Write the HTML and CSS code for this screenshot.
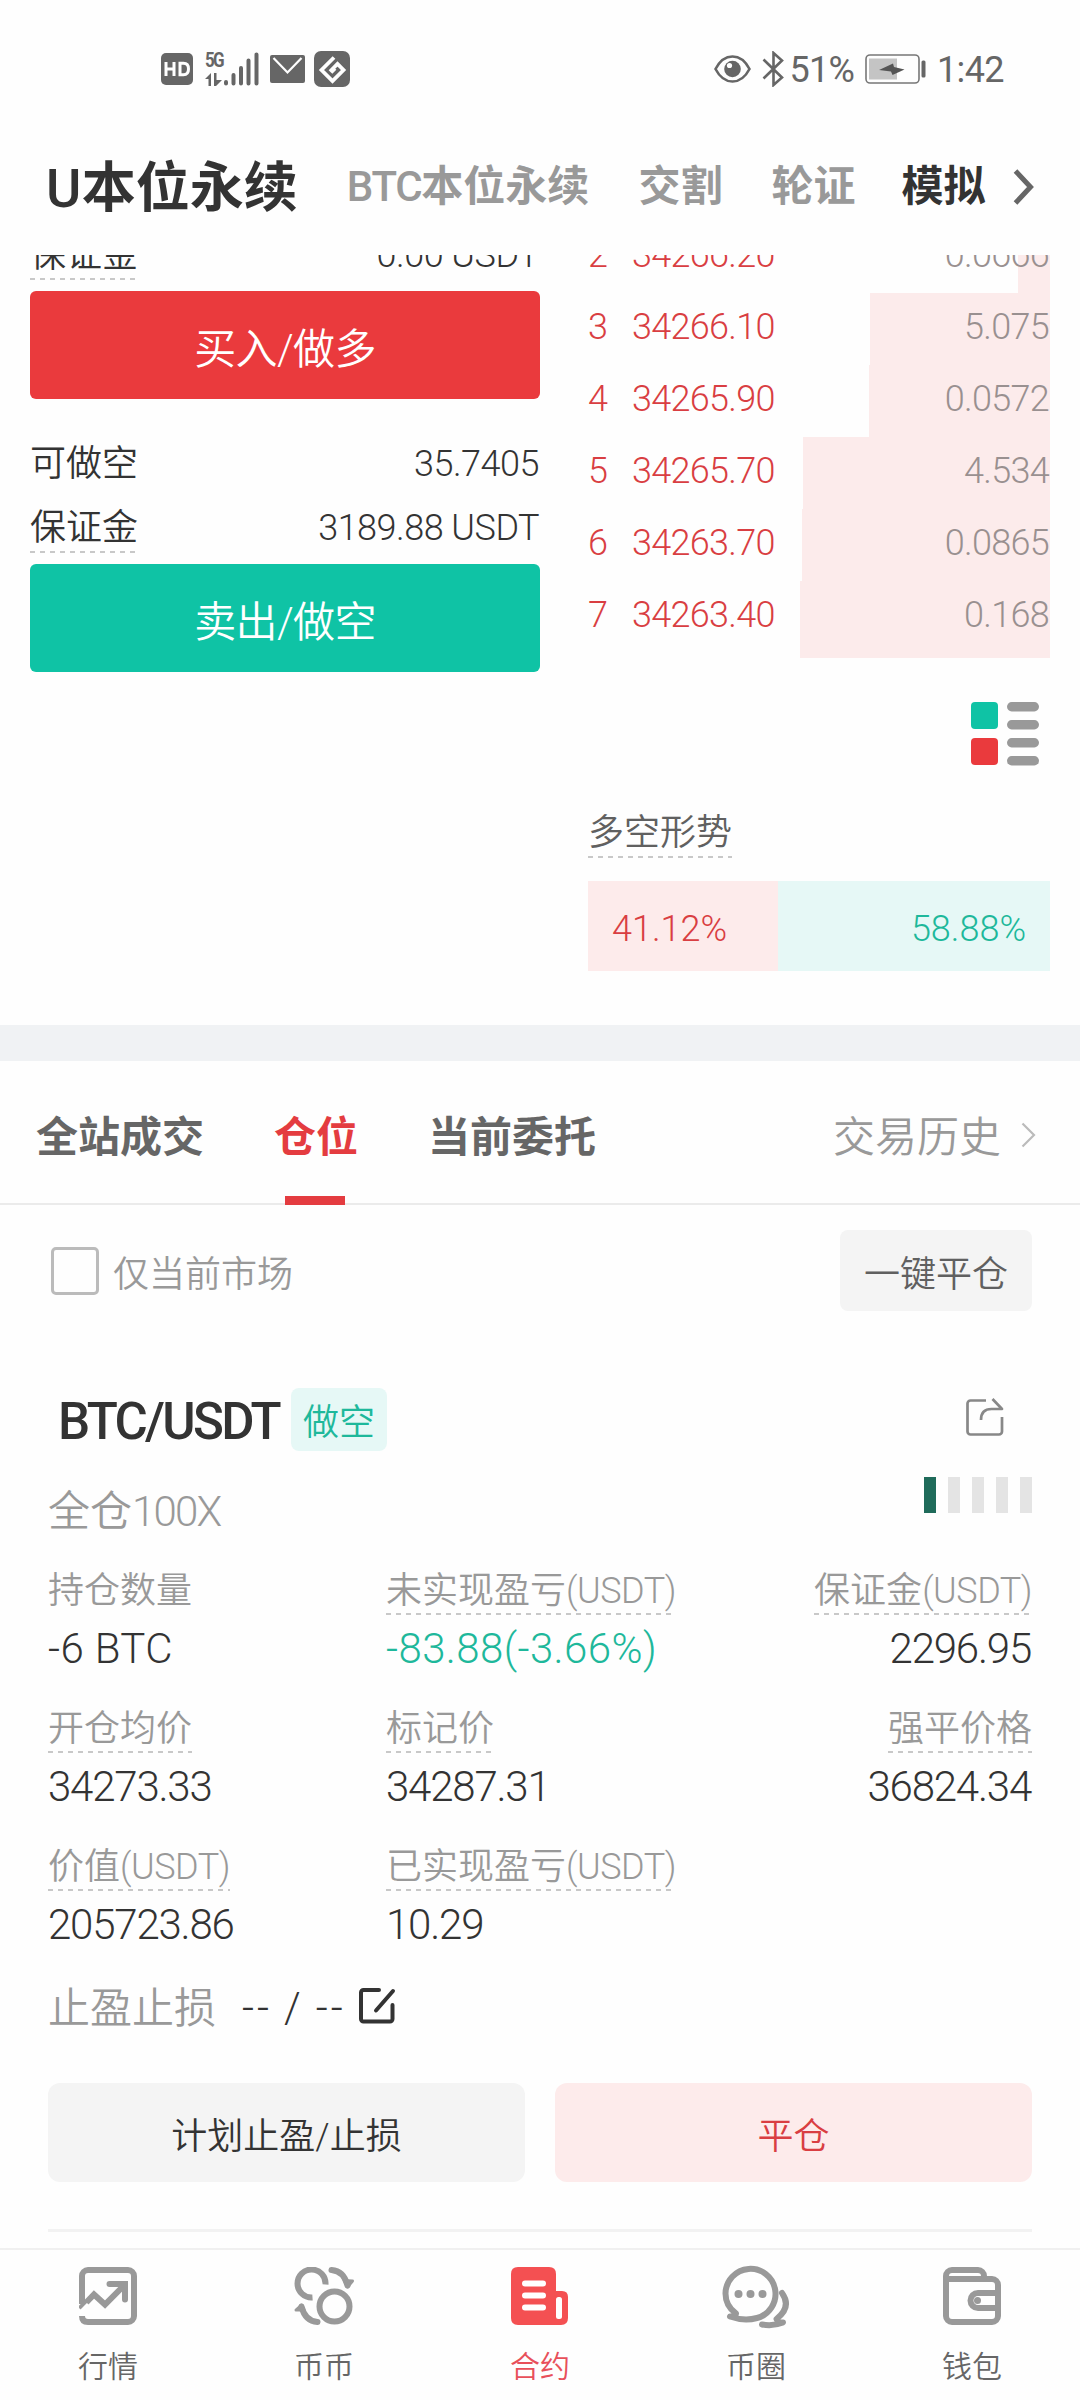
FILE: index.html
```html
<!DOCTYPE html>
<html lang="zh-CN">
<head>
<meta charset="utf-8">
<title>U本位永续</title>
<link rel="stylesheet" href="styles.css">
</head>
<body>
<div class="app">
  <div class="status">
    <div class="status-left">
      <svg class="hd" width="32" height="32" viewBox="0 0 32 32"><rect width="32" height="32" rx="5" fill="#666"/><path d="M5 9v14M13 9v14M5 16h8M19 10.300h3.500q5 0 5 5.700t-5 5.700H19z" fill="none" stroke="#fff" stroke-width="3"/></svg>
      <div class="signal">
        <div class="net"><span>5G</span>
          <svg width="17" height="13" viewBox="0 0 17 13"><path d="M0 6 6 0V13H3.500V6zM9 0h2.500v7H17L11 13H9z" fill="#666"/></svg></div>
        <svg width="36" height="36" viewBox="0 0 36 36" stroke="#666" stroke-width="4" stroke-linecap="round"><path d="M3 31v1.500M10.500 24v8.500M18 17v15.500M25.500 9.500v23M33.500 3.500v29"/></svg>
      </div>
      <svg class="mail" width="35" height="28" viewBox="0 0 35 28"><rect width="35" height="28" rx="2" fill="#666"/><path d="M3.500 3 17.500 17.500 31.500 3" fill="none" stroke="#fff" stroke-width="2.200"/></svg>
      <svg class="gee" width="36" height="36" viewBox="0 0 36 36"><rect width="36" height="36" rx="7" fill="#666"/><path d="M20 6.500 7.500 19 18.500 30 29.500 19 23.500 13 16 20.500M21 17.500 17 21.500" fill="none" stroke="#fff" stroke-width="3.800"/></svg>
    </div>
    <div class="status-right">
      <svg class="eye" width="37" height="28" viewBox="0 0 37 28"><path d="M1.500 14Q8 1.500 18.500 1.500T35.500 14Q29 26.500 18.500 26.500T1.500 14z" fill="none" stroke="#666" stroke-width="2.600"/><circle cx="18.500" cy="14" r="8.300" fill="#666"/><circle cx="15.500" cy="10.500" r="2.600" fill="#fff"/></svg>
      <svg class="bt" width="22" height="36" viewBox="0 0 22 36"><path d="M1.500 8.500 20 26.500 11.500 34V2L20 9.500 1.500 27.500" fill="none" stroke="#666" stroke-width="2.600"/></svg>
      <span class="pct">51%</span>
      <svg class="bat" width="61" height="30" viewBox="0 0 61 30"><rect x="1" y="1" width="53" height="28" rx="4" fill="none" stroke="#777" stroke-width="1.600"/><rect x="4" y="4.500" width="28" height="21" fill="#c4c4c4"/><path d="M14 16 28 9.500 29 13 39.500 15.500 27.500 21 26 17.500z" fill="#555"/><rect x="56.500" y="6.500" width="4" height="17" rx="1.500" fill="#666"/></svg>
      <span class="time">1:42</span>
    </div>
  </div>

  <nav class="markets">
    <span class="market current"><b>U</b>本位永续</span>
    <span class="market"><b>BTC</b>本位永续</span>
    <span class="market">交割</span>
    <span class="market">轮证</span>
    <span class="market dark">模拟</span>
    <svg class="more" width="22" height="36" viewBox="0 0 22 36"><path d="M2.500 2 17.500 18 2.500 34" fill="none" stroke="#666" stroke-width="5"/></svg>
  </nav>

  <main class="scroller">
    <section class="trade">
      <div class="order-form">
        <div class="line first"><span class="hint">保证金</span><span class="amount">0.00 USDT</span></div>
        <button class="btn buy">买入/做多</button>
        <div class="line gap"><span>可做空</span><span class="amount">35.7405</span></div>
        <div class="line"><span class="hint">保证金</span><span class="amount">3189.88 USDT</span></div>
        <button class="btn sell">卖出/做空</button>
      </div>
      <div class="book">
        <div class="ask"><i style="width:32px"></i><b>2</b><span>34266.20</span><em>0.0666</em></div>
        <div class="ask"><i style="width:180px"></i><b>3</b><span>34266.10</span><em>5.075</em></div>
        <div class="ask"><i style="width:181px"></i><b>4</b><span>34265.90</span><em>0.0572</em></div>
        <div class="ask"><i style="width:247px"></i><b>5</b><span>34265.70</span><em>4.534</em></div>
        <div class="ask"><i style="width:248px"></i><b>6</b><span>34263.70</span><em>0.0865</em></div>
        <div class="ask last"><i style="width:250px"></i><b>7</b><span>34263.40</span><em>0.168</em></div>
        <div class="depth">
          <svg width="68" height="64" viewBox="0 0 68 64"><rect width="27" height="27" rx="4" fill="#0fc3a5"/><rect y="36" width="27" height="27" rx="4" fill="#ea3a3d"/><g fill="#999"><rect x="36" width="32" height="9.500" rx="4.700"/><rect x="36" y="18" width="32" height="9.500" rx="4.700"/><rect x="36" y="36" width="32" height="9.500" rx="4.700"/><rect x="36" y="54" width="32" height="9.500" rx="4.700"/></g></svg>
        </div>
        <span class="hint trend-title">多空形势</span>
        <div class="trend"><span class="long" style="width:41.12%">41.12%</span><span class="short">58.88%</span></div>
      </div>
    </section>

    <div class="band"></div>

    <div class="tabs">
      <span class="tab">全站成交</span>
      <span class="tab active">仓位</span>
      <span class="tab">当前委托</span>
      <span class="history">交易历史<svg width="15" height="26" viewBox="0 0 15 26"><path d="M1.500 1.500 13 13 1.500 24.500" fill="none" stroke="#bbb" stroke-width="2.200"/></svg></span>
    </div>

    <section class="filter">
      <span class="check"></span><span class="check-label">仅当前市场</span>
      <button class="close-all">一键平仓</button>
    </section>

    <section class="position">
      <div class="pair">
        <span class="symbol">BTC/USDT</span><span class="side">做空</span>
        <svg class="share" width="40" height="40" viewBox="0 0 40 40"><path d="M21 4.500H5.500a3 3 0 0 0-3 3v28a3 3 0 0 0 3 3h28.500a3 3 0 0 0 3-3V21M16 24q0-11 10.500-11H37L27.500 3" fill="none" stroke="#888" stroke-width="2.700" stroke-linejoin="round"/></svg>
      </div>
      <div class="leverage">
        <span>全仓<span class="times">100X</span></span>
        <div class="risk"><i class="on"></i><i></i><i></i><i></i><i></i></div>
      </div>
      <div class="grid">
        <div class="cell"><span class="label">持仓数量</span><span class="value wide">-6 BTC</span></div>
        <div class="cell"><span class="label hint">未实现盈亏<u>(USDT)</u></span><span class="value wide green">-83.88(-3.66%)</span></div>
        <div class="cell end"><span class="label hint">保证金<u>(USDT)</u></span><span class="value">2296.95</span></div>
        <div class="cell"><span class="label hint">开仓均价</span><span class="value">34273.33</span></div>
        <div class="cell"><span class="label hint">标记价</span><span class="value">34287.31</span></div>
        <div class="cell end"><span class="label hint">强平价格</span><span class="value">36824.34</span></div>
        <div class="cell"><span class="label hint">价值<u>(USDT)</u></span><span class="value">205723.86</span></div>
        <div class="cell"><span class="label hint">已实现盈亏<u>(USDT)</u></span><span class="value">10.29</span></div>
      </div>
      <div class="stops">
        <span class="stops-label">止盈止损</span><span class="stops-value">--<s>/</s>--</span>
        <svg width="38" height="38" viewBox="0 0 38 38"><path d="M21 3H5.500a2.500 2.500 0 0 0-2.500 2.500v26.500a2.500 2.500 0 0 0 2.500 2.500H32a2.500 2.500 0 0 0 2.500-2.500V18M18 23.500 35 4" fill="none" stroke="#333" stroke-width="4" stroke-linejoin="round" stroke-linecap="round"/></svg>
      </div>
      <div class="actions">
        <button class="act">计划止盈/止损</button>
        <button class="act close">平仓</button>
      </div>
    </section>
  </main>

  <footer class="nav">
    <div class="item"><svg width="58" height="58" viewBox="0 0 58 58" fill="none" stroke="#999" stroke-width="6"><path d="M3 37V9a6 6 0 0 1 6-6h40a6 6 0 0 1 6 6v40a6 6 0 0 1-6 6H9q-6 0-6-6"/><path d="M1 42 15 27.500 26 37.500 45.500 18"/><path d="M30.500 17H46v15.500" stroke-linecap="round"/><path d="M0 46 9 37" stroke="#fff" stroke-width="3"/></svg><span>行情</span></div>
    <div class="item"><svg width="60" height="58" viewBox="0 0 60 58" fill="none" stroke="#999" stroke-width="6"><circle cx="40.500" cy="39.500" r="15"/><path d="M18.500 30.500A14 14 0 1 1 31.500 17.500"/><path d="M37.500 3Q50 4 53.500 18.500M23.500 55Q11 54 7.500 39.500" stroke-linecap="round"/><path d="M50 13.500 58.500 14 53.500 20zM2 43 7.500 38 10 43z" fill="#999" stroke-width="3" stroke-linejoin="round"/></svg><span>币币</span></div>
    <div class="item on"><svg width="58" height="58" viewBox="0 0 58 58"><path d="M7 0h31q7 0 7 7v17h6q6 0 6 6v21q0 7-7 7H7q-7 0-7-7V7q0-7 7-7z" fill="#f45052"/><path d="M14 16.500h18M14 28.500h18M14 40.500h18" stroke="#fff" stroke-width="6" stroke-linecap="round"/><rect x="45" y="30" width="6" height="22" rx="2.500" fill="#fff"/></svg><span>合约</span></div>
    <div class="item chat"><svg width="68" height="64" viewBox="0 0 68 64" fill="none" stroke="#999" stroke-width="6" stroke-linejoin="round"><path d="M14 48.500Q3.500 41 3.500 28.500A25 25 0 1 1 35 53Q22 56.500 8 51.500Q13.500 52 14 48.500z"/><path d="M60 28Q70 42 54.500 54Q56 58 61 57.500Q51 61.500 40 59.500" stroke-linecap="round"/><g fill="#999" stroke="none"><circle cx="16.500" cy="29" r="4"/><circle cx="28.500" cy="29" r="4"/><circle cx="40.500" cy="29" r="4"/></g></svg><span>币圈</span></div>
    <div class="item"><svg width="58" height="58" viewBox="0 0 58 58" fill="none" stroke="#999" stroke-width="6"><path d="M3 12v37a6 6 0 0 0 6 6h40a6 6 0 0 0 6-6V18a6 6 0 0 0-6-6zM3 13V9a6 6 0 0 1 6-6h26a6 6 0 0 1 6 6v3M55 26H35a7.500 7.500 0 0 0 0 15h20"/><circle cx="34.500" cy="33.500" r="3.500" fill="#999" stroke="none"/></svg><span>钱包</span></div>
  </footer>
</div>
</body>
</html>
```
FILE: styles.css
```css
* { box-sizing: border-box; }
body { margin: 0; background: #fff; }
button { border: 0; padding: 0; font: inherit; color: inherit; }
i, em { font-style: normal; }
b { font-weight: inherit; }
u { text-decoration: none; letter-spacing: -0.5px; }
s { text-decoration: none; margin: 0 12px; }
svg { display: block; flex: none; }

.app {
  width: 1080px;
  height: 2400px;
  display: flex;
  flex-direction: column;
  overflow: hidden;
  background: #fefefe;
  color: #333;
  font: 350 36px/50px Roboto, "Noto Sans CJK SC", sans-serif;
  white-space: nowrap;
}

.status {
  flex: none;
  height: 137px;
  padding: 0 76px 0 161px;
  display: flex;
  justify-content: space-between;
  align-items: center;
  font-weight: 400;
  color: #666;
}
.status-left, .status-right, .signal { display: flex; align-items: center; }
.signal { margin-left: 12px; }
.net { display: flex; flex-direction: column; gap: 4px; width: 18px; }
.net span { font-size: 20px; line-height: 17px; font-weight: 700; letter-spacing: -2px; transform: scaleX(.85); transform-origin: left; }
.mail { margin-left: 11px; }
.gee { margin-left: 9px; }
.bt { margin-left: 11px; }
.pct { margin-left: 6px; letter-spacing: -0.8px; padding-top: 2px; }
.bat { margin-left: 11px; }
.time { margin-left: 11px; letter-spacing: -0.6px; padding-top: 2px; }

.markets {
  flex: none;
  height: 118px;
  padding: 0 0 18px 46px;
  display: flex;
  align-items: center;
}
.market { font-size: 42px; font-weight: 700; color: #999; margin-right: 49px; }
.market b { font-weight: 500; letter-spacing: -1.300px; }
.market.current { font-size: 54px; color: #333; padding-top: 3px; }
.market.current b { letter-spacing: 0.5px; }
.market.dark { color: #333; margin: 0 28px 0 -3px; }

.scroller { flex: 1; min-height: 0; overflow: hidden; }

.trade {
  margin-top: -34px;
  height: 804px;
  padding: 0 30px;
  display: flex;
  justify-content: space-between;
}
.order-form { width: 510px; }
.line { height: 64px; padding-top: 2px; display: flex; justify-content: space-between; align-items: center; }
.line.first { height: 66px; }
.line.gap { margin-top: 32px; }
.amount { letter-spacing: -0.5px; padding-right: 1px; }
.hint {
  background: repeating-linear-gradient(90deg, #c8c8c8 0 5px, transparent 5px 10px) left bottom / 100% 2px no-repeat;
}
.btn {
  display: block;
  width: 100%;
  height: 108px;
  margin-top: 4px;
  padding-top: 9px;
  border-radius: 6px;
  font-size: 42px;
  letter-spacing: -0.6px;
  color: #fff;
}
.buy { background: #ea3a3d; }
.sell { background: #0fc3a5; margin-top: 5px; }

.book { width: 462px; display: flex; flex-direction: column; }
.ask {
  position: relative;
  height: 72px;
  padding-bottom: 5px;
  display: flex;
  align-items: center;
  color: #d93e42;
  letter-spacing: -0.7px;
}
.ask.last { height: 77px; padding-bottom: 10px; }
.ask i { position: absolute; right: 0; top: 0; bottom: 0; background: #fcebeb; }
.ask b, .ask span, .ask em { position: relative; }
.ask b { width: 44px; }
.ask em { margin-left: auto; padding-right: 1px; color: #999090; }
.depth { display: flex; justify-content: flex-end; margin-top: 44px; padding-right: 11px; }
.trend-title { align-self: flex-start; margin-top: 42px; color: #606060; }
.trend { display: flex; height: 90px; margin-top: 23px; line-height: 96px; }
.long { background: #fdebeb; color: #d93e42; padding-left: 24px; }
.short { flex: 1; background: #e6f8f6; color: #1eb89b; padding-right: 24px; text-align: right; }

.band { height: 36px; background: #f0f2f4; }

.tabs {
  height: 144px;
  padding: 5px 44px 0 36px;
  display: flex;
  gap: 70px;
  font-size: 42px;
  line-height: 144px;
  border-bottom: 2px solid #ebebeb;
}
.tab { font-weight: 700; color: #666; }
.tab.active { position: relative; color: #e43c40; }
.tab.active::after {
  content: "";
  position: absolute;
  left: 11px;
  top: 130px;
  width: 60px;
  height: 9px;
  background: #e43c40;
}
.history { margin-left: auto; display: flex; align-items: center; gap: 20px; color: #999; height: 144px; }
.history svg { margin-top: -6px; }

.filter { height: 132px; padding: 0 48px 1px 51px; display: flex; align-items: center; color: #999; }
.check { width: 48px; height: 48px; border: 3px solid #bbb; border-radius: 5px; }
.check-label { margin: 8px 0 0 14px; }
.close-all { margin-left: auto; width: 192px; height: 81px; padding-top: 8px; border-radius: 8px; background: #f4f4f4; color: #606060; }

.position { margin: 0 48px; height: 895px; border-bottom: 3px solid #f2f2f2; padding-top: 50px; }
.pair { height: 64px; padding: 0 27px 0 10px; display: flex; align-items: center; }
.symbol { font-size: 51px; font-weight: 500; letter-spacing: -2.700px; line-height: 64px; padding-top: 6px; }
.side { margin-left: 12px; width: 96px; height: 63px; line-height: 70px; text-align: center; border-radius: 8px; background: #e6f8f6; color: #1eb89b; }
.share { margin: 0 0 6px auto; }
.leverage { height: 66px; margin-top: 26px; display: flex; justify-content: space-between; font-size: 42px; line-height: 69px; color: #999; }
.times { letter-spacing: -1.800px; }
.risk { display: flex; gap: 12px; height: 36px; }
.risk i { width: 12px; background: #e4e4e4; }
.risk .on { background: #1f6b5a; }

.grid { display: grid; grid-template-columns: 338px 1fr auto; grid-auto-rows: 138px; margin-top: 22px; }
.cell { display: flex; flex-direction: column; align-items: flex-start; }
.cell.end { align-items: flex-end; }
.label { color: #999; height: 50px; line-height: 52px; }
.value { font-size: 42px; letter-spacing: -1.200px; margin-top: 9px; }
.value.wide { letter-spacing: 0.4px; }
.cell.end .value { padding-right: 1px; }
.green { color: #1eb89b; }

.stops { display: flex; align-items: center; height: 60px; margin-top: -1px; font-size: 42px; }
.stops-label { color: #999; padding-top: 2px; }
.stops-value { margin-left: 26px; width: 116px; letter-spacing: 3px; }
.stops svg { margin-top: -5px; }

.actions { display: flex; gap: 30px; margin-top: 45px; }
.act { flex: 1; height: 99px; padding-top: 8px; border-radius: 12px; background: #f4f4f4; color: #333; }
.act.close { background: #fdebeb; color: #d93e42; }

.nav {
  flex: none;
  height: 152px;
  border-top: 2px solid #f0f0f0;
  background: #fefefe;
  display: flex;
  font-size: 30px;
  line-height: 40px;
  color: #666;
}
.item { flex: 1; display: flex; flex-direction: column; justify-content: space-between; align-items: center; padding: 17px 0 13px; }
.item.chat { padding-top: 15px; }
.item.on { color: #e8505a; }
```
